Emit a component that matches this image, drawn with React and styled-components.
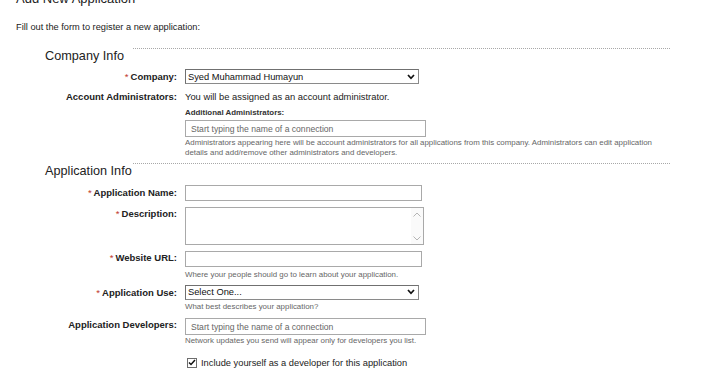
import React from "react";
import styled, { createGlobalStyle } from "styled-components";

const Global = createGlobalStyle`
  html, body { margin: 0; padding: 0; background: #fff; }
  body { font-family: Arial, "Liberation Sans", sans-serif; color: #222; overflow: hidden; }
`;

const Page = styled.div`
  padding: 0 0 0 16px;
  width: 718px;
  height: 377px;
  box-sizing: border-box;
  overflow: hidden;
`;

const Title = styled.h1`
  margin: -8px 0 0 0;
  font-size: 13px;
  line-height: 14px;
  font-weight: normal;
  color: #222;
`;

const Intro = styled.p`
  margin: 16px 0 0 0;
  font-size: 9.25px;
  line-height: 11px;
  color: #222;
`;

const SectionHeader = styled.div`
  display: flex;
  align-items: flex-start;
  margin-top: ${(p) => p.$top}px;
`;

const SectionTitle = styled.h2`
  margin: 0 0 0 29px;
  width: 88px;
  font-size: 12.7px;
  line-height: 16px;
  font-weight: normal;
  color: #222;
  white-space: nowrap;
`;

const Rule = styled.div`
  width: 537px;
  border-top: 1px dotted #a8a8a8;
`;

const Row = styled.div`
  display: grid;
  grid-template-columns: 161px 1fr;
  column-gap: 8px;
  align-items: start;
  margin-top: ${(p) => p.$top}px;
`;

const Label = styled.div`
  text-align: right;
  font-size: 9.5px;
  font-weight: bold;
  line-height: ${(p) => p.$lh || 15}px;
  padding-top: ${(p) => p.$pt || 0}px;
  color: #222;
  white-space: nowrap;
`;

const Star = styled.span`
  color: #c0392b;
  font-weight: normal;
  margin-right: 2px;
`;

const Field = styled.div`
  display: flex;
  flex-direction: column;
  align-items: flex-start;
`;

const PlainText = styled.div`
  font-size: 9.4px;
  line-height: 12px;
  color: #222;
`;

const SubLabel = styled.div`
  margin-top: 5px;
  font-size: 7.9px;
  font-weight: bold;
  line-height: 10px;
  color: #333;
`;

const Input = styled.div`
  box-sizing: border-box;
  width: ${(p) => p.$w}px;
  height: ${(p) => p.$h}px;
  margin-top: ${(p) => p.$top || 0}px;
  border: 1px solid #a9a9a9;
  background: #fff;
  padding-left: 5px;
  display: flex;
  align-items: center;
  font-size: 8.6px;
  color: #666;
`;

const Select = styled.div`
  box-sizing: border-box;
  width: ${(p) => p.$w}px;
  height: 15px;
  border: 1px solid #8a8a8a;
  border-top-color: #707070;
  border-left-color: #707070;
  background: #fff;
  padding: 0 3px 0 2px;
  display: flex;
  align-items: center;
  justify-content: space-between;
  font-size: 9.3px;
  color: #111;
`;

const TextArea = styled.div`
  box-sizing: border-box;
  width: ${(p) => p.$w}px;
  height: ${(p) => p.$h}px;
  border: 1px solid #a9a9a9;
  background: #fff;
  display: flex;
  justify-content: flex-end;
`;

const ScrollCol = styled.div`
  width: 12px;
  background: #fafafa;
  display: flex;
  flex-direction: column;
  justify-content: space-between;
  align-items: center;
  padding: 4px 0 3px;
`;

const Help = styled.div`
  margin-top: ${(p) => p.$top || 0}px;
  font-size: 7.9px;
  line-height: 9.5px;
  color: #666;
  max-width: ${(p) => p.$max || 600}px;
`;

const CheckRow = styled.div`
  display: flex;
  align-items: center;
  gap: 4px;
  margin-left: 2px;
  margin-top: ${(p) => p.$top || 0}px;
  font-size: 9.3px;
  line-height: 12px;
  color: #222;
`;

const Box = styled.div`
  box-sizing: border-box;
  width: 10px;
  height: 10px;
  border: 1px solid #6d6d6d;
  background: #fff;
  display: flex;
  align-items: center;
  justify-content: center;
`;

const Chevron = () => (
  <svg width="8" height="6" viewBox="0 0 8 6">
    <polyline points="1,1 4,4.3 7,1" fill="none" stroke="#111" strokeWidth="1.7" />
  </svg>
);

const Arrow = ({ up }) => (
  <svg width="8" height="5" viewBox="0 0 8 5">
    <polyline points={up ? "0.5,4.5 4,1 7.5,4.5" : "0.5,0.5 4,4 7.5,0.5"} fill="none" stroke="#b5b5b5" strokeWidth="1" />
  </svg>
);

const Req = ({ children }) => (
  <>
    <Star>*</Star>
    {children}
  </>
);

export default function App() {
  return (
    <Page>
      <Global />
      <Title>Add New Application</Title>
      <Intro>Fill out the form to register a new application:</Intro>

      <SectionHeader $top={15}>
        <SectionTitle>Company Info</SectionTitle>
        <Rule />
      </SectionHeader>

      <Row $top={5}>
        <Label><Req>Company:</Req></Label>
        <Field>
          <Select $w={234}>
            <span>Syed Muhammad Humayun</span>
            <Chevron />
          </Select>
        </Field>
      </Row>

      <Row $top={7}>
        <Label $lh={12}>Account Administrators:</Label>
        <Field>
          <PlainText>You will be assigned as an account administrator.</PlainText>
          <SubLabel>Additional Administrators:</SubLabel>
          <Input $w={241} $h={17} $top={2}>Start typing the name of a connection</Input>
          <Help $top={1} $max={475}>
            Administrators appearing here will be account administrators for all applications from this company. Administrators can edit application details and add/remove other administrators and developers.
          </Help>
        </Field>
      </Row>

      <SectionHeader $top={6}>
        <SectionTitle>Application Info</SectionTitle>
        <Rule />
      </SectionHeader>

      <Row $top={6}>
        <Label $lh={16}><Req>Application Name:</Req></Label>
        <Field>
          <Input $w={237} $h={16} />
        </Field>
      </Row>

      <Row $top={6}>
        <Label $lh={12} $pt={1}><Req>Description:</Req></Label>
        <Field>
          <TextArea $w={239} $h={38}>
            <ScrollCol>
              <Arrow up />
              <Arrow />
            </ScrollCol>
          </TextArea>
        </Field>
      </Row>

      <Row $top={6}>
        <Label $lh={14}><Req>Website URL:</Req></Label>
        <Field>
          <Input $w={237} $h={16} />
          <Help $top={3}>Where your people should go to learn about your application.</Help>
        </Field>
      </Row>

      <Row $top={5}>
        <Label $lh={15}><Req>Application Use:</Req></Label>
        <Field>
          <Select $w={234}>
            <span>Select One...</span>
            <Chevron />
          </Select>
          <Help $top={2}>What best describes your application?</Help>
        </Field>
      </Row>

      <Row $top={7}>
        <Label $lh={14}>Application Developers:</Label>
        <Field>
          <Input $w={241} $h={17}>Start typing the name of a connection</Input>
          <Help $top={1}>Network updates you send will appear only for developers you list.</Help>
          <CheckRow $top={11}>
            <Box>
              <svg width="8" height="7" viewBox="0 0 8 7">
                <polyline points="1,3.5 3,5.5 7,1" fill="none" stroke="#111" strokeWidth="1.5" />
              </svg>
            </Box>
            <span>Include yourself as a developer for this application</span>
          </CheckRow>
        </Field>
      </Row>
    </Page>
  );
}
